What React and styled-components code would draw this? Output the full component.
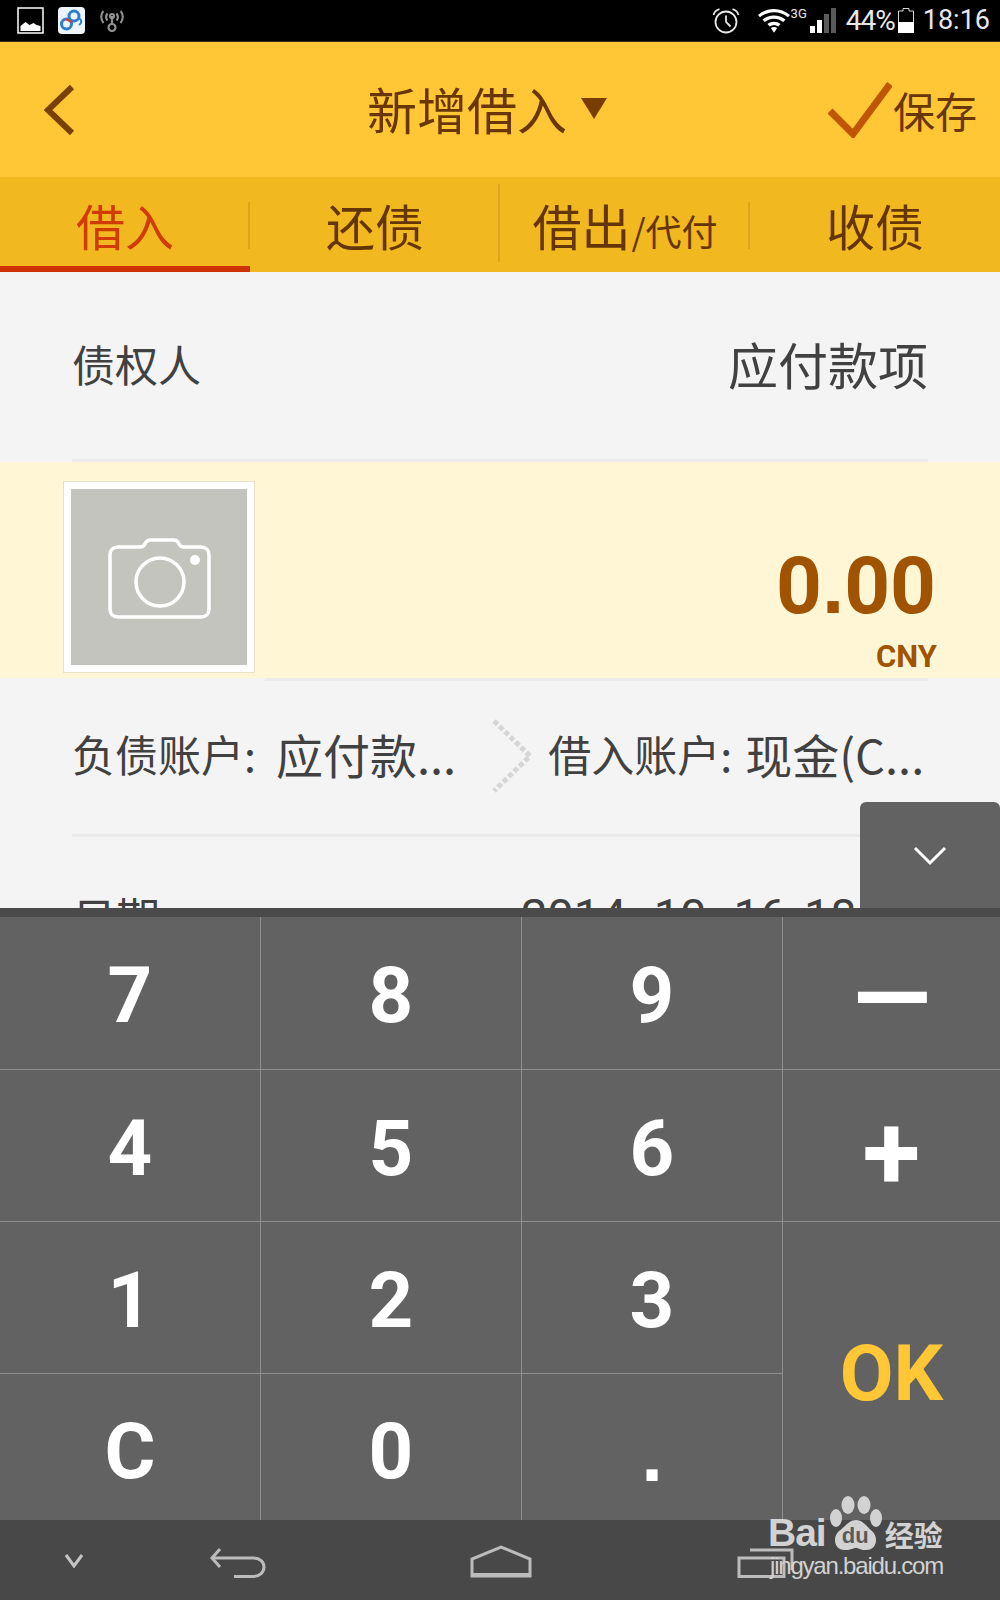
import styled, { createGlobalStyle } from "styled-components";

const GlobalStyle = createGlobalStyle`
  html, body {
    margin: 0;
    padding: 0;
    background: #f4f4f4;
  }
  * {
    box-sizing: border-box;
  }
`;

const cjk = `"Noto Sans CJK SC", "Liberation Sans", sans-serif`;
const roboto = `Roboto, "Liberation Sans", sans-serif`;
const arial = `"Liberation Sans", sans-serif`;

const Screen = styled.div`
  position: relative;
  width: 1000px;
  height: 1600px;
  display: flex;
  flex-direction: column;
  overflow: hidden;
  font-family: ${cjk};
`;

const StatusBar = styled.div`
  height: 42px;
  flex: none;
  background: #000;
  border-bottom: 1px solid #3a3218;
  display: flex;
  align-items: center;
  justify-content: space-between;
  padding: 0 10px 0 17px;
`;

const StatusGroup = styled.div`
  display: flex;
  align-items: center;
  gap: ${(p) => p.$gap || 0}px;
`;

const StatusIcon = styled.span`
  display: flex;
  margin-left: ${(p) => p.$ml || 0}px;
`;

const StatusText = styled.span`
  font-family: ${roboto};
  font-size: ${(p) => p.$size || 28}px;
  line-height: 41px;
  color: #e8e8e8;
  margin-left: ${(p) => p.$ml || 0}px;
  letter-spacing: ${(p) => p.$spacing || 0}px;
`;

const NetworkLabel = styled.span`
  font-family: ${roboto};
  font-size: 13px;
  line-height: 14px;
  color: #e8e8e8;
  margin: -13px 0 0 1px;
`;

const Header = styled.header`
  height: 135px;
  flex: none;
  background: #ffc736;
  display: grid;
  grid-template-columns: 324px auto 1fr;
  align-items: center;
  padding: 0 23px 0 43px;
`;

const Title = styled.h1`
  margin: -3px 0 0;
  display: flex;
  align-items: center;
  gap: 13px;
  font-size: 50px;
  font-weight: 400;
  line-height: 1;
  color: #6a3606;
`;

const SaveButton = styled.div`
  justify-self: end;
  display: flex;
  align-items: center;
  gap: 1px;
  font-size: 42px;
  color: #6a3606;
`;

const Tabs = styled.nav`
  height: 95px;
  flex: none;
  background: #f1b820;
  display: grid;
  grid-template-columns: repeat(4, 1fr);
`;

const Tab = styled.div`
  position: relative;
  display: flex;
  align-items: baseline;
  justify-content: center;
  padding-top: 15px;
  font-size: 49px;
  line-height: 66px;
  color: ${(p) => (p.$active ? "#cf3c05" : "#663506")};
  border-bottom: 6px solid ${(p) => (p.$active ? "#cf3106" : "transparent")};

  &::after {
    content: "";
    display: ${(p) => (p.$last ? "none" : "block")};
    position: absolute;
    right: 0;
    top: ${(p) => (p.$tall ? 7 : 25)}px;
    bottom: ${(p) => (p.$tall ? 4 : 17)}px;
    width: 2px;
    background: #dda51e;
  }
`;

const TabSmall = styled.span`
  font-size: 36px;
  margin-left: 1px;
`;

const Content = styled.main`
  flex: 1;
  min-height: 0;
  overflow: hidden;
  background: #f4f4f4;
`;

const PayeeRow = styled.div`
  height: 190px;
  margin: 0 72px;
  display: flex;
  align-items: center;
  justify-content: space-between;
  padding-bottom: 5px;
  border-bottom: 3px solid #ebebeb;
  color: #414141;
`;

const PayeeLabel = styled.span`
  font-size: 43px;
`;

const PayeeValue = styled.span`
  font-size: 50px;
`;

const AmountBlock = styled.section`
  height: 216px;
  background: #fff6d6;
  display: flex;
  padding: 20px 0 0 64px;
`;

const PhotoBox = styled.div`
  width: 190px;
  height: 190px;
  flex: none;
  background: #c4c4bf;
  border: 7px solid #fff;
  outline: 1px solid #eadfc8;
  display: flex;
  align-items: center;
  justify-content: center;
  padding: 3px 0 0 2px;
`;

const AmountCol = styled.div`
  flex: 1;
  margin: -20px 72px 0 11px;
  display: flex;
  flex-direction: column;
  align-items: flex-end;
  border-bottom: 3px solid #ebebeb;
  height: 219px;
  font-family: ${roboto};
  font-weight: 700;
  color: #a05300;
`;

const Amount = styled.div`
  font-size: 80px;
  line-height: 94px;
  margin: 77px -8px 0 0;
`;

const AmountPoint = styled.span`
  font-family: ${arial};
`;

const Currency = styled.div`
  font-size: 31px;
  line-height: 36px;
  margin: 6px -9px 0 0;
`;

const AccountRow = styled.div`
  height: 159px;
  margin: 0 72px;
  display: flex;
  align-items: center;
  padding-bottom: 6px;
  border-bottom: 3px solid #ebebeb;
  color: #414141;
  white-space: nowrap;
`;

const AccountLabel = styled.span`
  font-size: 43px;
`;

const AccountValue = styled.span`
  font-size: 47px;
  margin-left: ${(p) => p.$gap}px;
`;

const Arrow = styled.svg`
  flex: none;
  margin: 6px 16px 0 36px;
`;

const DateRow = styled.div`
  height: 157px;
  margin: 0 72px;
  display: flex;
  align-items: center;
  justify-content: space-between;
  color: #414141;
`;

const DateLabel = styled.span`
  font-size: 44px;
`;

const DateValue = styled.span`
  font-family: ${roboto};
  font-size: 47px;
  word-spacing: 6px;
  margin-right: 7px;
`;

const DateDash = styled.span`
  padding: 0 7px;
`;

const CollapseTab = styled.div`
  position: absolute;
  right: 0;
  top: 802px;
  width: 140px;
  height: 106px;
  background: #626262;
  border-radius: 6px 6px 0 0;
  display: flex;
  justify-content: center;
  padding-top: 44px;
`;

const Keypad = styled.section`
  flex: none;
  height: 612px;
  background: #626262;
  border-top: 9px solid #4a4a4a;
  display: grid;
  grid-template-columns: 261px 261px 261px 1fr;
  grid-template-rows: 153px 152px 152px 1fr;
`;

const Key = styled.div`
  display: flex;
  align-items: center;
  justify-content: center;
  padding-top: ${(p) => p.$shift ?? 6}px;
  font-family: ${(p) => (p.$arial ? arial : roboto)};
  font-weight: 700;
  font-size: ${(p) => p.$size || 78}px;
  line-height: 1;
  color: ${(p) => p.$color || "#fff"};
  border-right: ${(p) => (p.$noRight ? "0" : "1px solid #8f8f8f")};
  border-bottom: ${(p) => (p.$noBottom ? "0" : "1px solid #8f8f8f")};
  ${(p) => p.$tall && "grid-row: span 2;"}
`;

const NavBar = styled.nav`
  flex: none;
  height: 80px;
  background: #484848;
  display: grid;
  grid-template-columns: 145px 261px 267px 1fr;
  align-items: end;
  padding: 0 0 22px 64px;
`;

const NavChevronBox = styled.div`
  display: flex;
  margin-bottom: 10px;
`;

const Watermark = styled.div`
  position: absolute;
  left: 768px;
  top: 1496px;
  width: 180px;
  color: #d2d2d2;
`;

const WatermarkLogo = styled.div`
  display: flex;
  align-items: flex-end;
  height: 56px;
`;

const WatermarkBai = styled.span`
  font-family: ${arial};
  font-weight: 700;
  font-size: 39px;
  line-height: 38px;
  letter-spacing: -1px;
`;

const WatermarkPaw = styled.div`
  position: relative;
  width: 54px;
  height: 56px;
  margin-left: 3px;
  flex: none;
`;

const WatermarkDu = styled.span`
  position: absolute;
  left: 13px;
  bottom: 5px;
  font-family: ${arial};
  font-weight: 700;
  font-size: 22px;
  line-height: 22px;
  color: #5a5a5a;
`;

const WatermarkCn = styled.span`
  font-size: 29px;
  line-height: 36px;
  font-weight: 700;
  margin-left: 2px;
`;

const WatermarkUrl = styled.div`
  margin: 1px 0 0 2px;
  font-family: ${arial};
  font-size: 24px;
  line-height: 26px;
  letter-spacing: -1.2px;
  white-space: nowrap;
`;

const ImageIcon = () => (
  <svg width="27" height="27" viewBox="0 0 27 27">
    <rect x="1" y="1" width="25" height="25" fill="#000" stroke="#fff" strokeWidth="1.500" />
    <path d="M3.500 24v-5l5-4 4 3 4-2 3 2 4 1v5z" fill="#fff" />
  </svg>
);

const BaiduAppIcon = () => (
  <svg width="27" height="27" viewBox="0 0 27 27">
    <rect width="27" height="27" rx="4" fill="#eef4fa" />
    <circle cx="8.500" cy="17" r="5" fill="none" stroke="#2b7fd0" strokeWidth="3" />
    <circle cx="16" cy="9" r="5" fill="none" stroke="#2b7fd0" strokeWidth="3" />
    <path d="M8 12l6 3" stroke="#d83a3a" strokeWidth="2.500" />
    <path d="M21 11c3 2 3 5 0 7" fill="none" stroke="#2b7fd0" strokeWidth="2" />
  </svg>
);

const AntennaIcon = () => (
  <svg width="26" height="22" viewBox="0 0 26 22" fill="none" stroke="#8f8f8f" strokeWidth="2.200">
    <circle cx="13" cy="17.500" r="3.500" />
    <path d="M13 14V6" />
    <circle cx="13" cy="6" r="2" />
    <path d="M8.500 10.500c-1.600-2-1.600-5 0-7M17.500 10.500c1.600-2 1.600-5 0-7M4.500 13c-3-3.600-3-9 0-12M21.500 13c3-3.600 3-9 0-12" />
  </svg>
);

const AlarmIcon = () => (
  <svg width="28" height="26" viewBox="0 0 28 26" fill="none" stroke="#e8e8e8" strokeWidth="1.800">
    <circle cx="14" cy="14" r="10.500" />
    <path d="M14 7.500V14l4.500 4.500" />
    <path d="M1.500 7C2.500 3.500 4.500 2 7.500 1.200M26.500 7c-1-3.500-3-5-6-5.800" />
  </svg>
);

const WifiIcon = () => (
  <svg width="32" height="25" viewBox="0 0 32 25" fill="#fff">
    <path d="M0 7C9-1 23-1 32 7l-2 2.300C22 2.500 10 2.500 2 9.300z" />
    <path d="M4.500 11.500c7-5.500 16-5.500 23 0l-2.200 2.500c-5.800-4.500-12.800-4.500-18.600 0z" />
    <path d="M9.500 16c4-3 9-3 13 0l-2.300 2.500c-2.800-2-5.600-2-8.400 0z" />
    <path d="M12.800 20c2-1.200 4.400-1.200 6.400 0L16 24.800z" />
  </svg>
);

const SignalIcon = () => (
  <svg width="26" height="25" viewBox="0 0 26 25">
    <rect x="0" y="18" width="5" height="7" fill="#fff" />
    <rect x="7" y="12" width="5" height="13" fill="#fff" />
    <rect x="14" y="6" width="5" height="19" fill="#5a5a5a" />
    <rect x="21" y="0" width="5" height="25" fill="#5a5a5a" />
  </svg>
);

const BatteryIcon = () => (
  <svg width="16" height="25" viewBox="0 0 16 25">
    <path d="M5 .5h6v2.500h4.500v21.500H.5V3H5z" fill="#000" stroke="#d8d8d8" />
    <rect x="0" y="14" width="16" height="11" fill="#fff" />
  </svg>
);

const BackChevron = () => (
  <svg width="32" height="52" viewBox="0 0 32 52" fill="none">
    <path d="M29 3L5 26l24 23" stroke="#7a4003" strokeWidth="6" />
  </svg>
);

const TitleCaret = () => (
  <svg width="28" height="22" viewBox="0 0 28 22">
    <path d="M1 1h26L14 22z" fill="#7a3c00" />
  </svg>
);

const CheckMark = () => (
  <svg width="64" height="56" viewBox="0 0 64 56" fill="none">
    <path d="M2 29l23 23L62 2" stroke="#bf5604" strokeWidth="7" />
  </svg>
);

const CameraIcon = () => (
  <svg width="104" height="82" viewBox="0 0 104 82" fill="none" stroke="#fff" strokeWidth="3.500">
    <path d="M10 9h22c3 0 4-1 5-3 1-3 3-4 6-4h22c3 0 5 1 6 4 1 2 2 3 5 3h17c5 0 8 3 8 8v54c0 5-3 8-8 8H10c-5 0-8-3-8-8V17c0-5 3-8 8-8z" />
    <circle cx="52" cy="44" r="24" />
    <circle cx="87" cy="22" r="5" fill="#fff" stroke="none" />
  </svg>
);

const PixelArrow = () => (
  <Arrow width="40" height="74" viewBox="0 0 40 74">
    <path d="M2 2l36 35L2 72" fill="none" stroke="#d6d6d6" strokeWidth="5" strokeDasharray="5 2.500" />
  </Arrow>
);

const CollapseChevron = () => (
  <svg width="34" height="20" viewBox="0 0 34 20" fill="none">
    <path d="M2 2l15 15L32 2" stroke="#fff" strokeWidth="3" />
  </svg>
);

const NavChevron = () => (
  <svg width="20" height="14" viewBox="0 0 20 14" fill="none">
    <path d="M2 1l8 11 8-11" stroke="#c4c4c4" strokeWidth="3" />
  </svg>
);

const NavBack = () => (
  <svg width="57" height="30" viewBox="0 0 57 30" fill="none" stroke="#bcbcbc" strokeWidth="3">
    <path d="M11 1L3 10l8 9" />
    <path d="M3 10h41c7 0 11 4 11 9 0 5-4 9.500-11 9.500H25" />
  </svg>
);

const NavHome = () => (
  <svg width="62" height="33" viewBox="0 0 62 33" fill="none" stroke="#bcbcbc" strokeWidth="3">
    <path d="M2 31V14L31 2l29 12v17z" />
    <path d="M2 30h58" strokeWidth="4" />
  </svg>
);

const NavRecent = () => (
  <svg width="57" height="30" viewBox="0 0 57 30" fill="none" stroke="#bcbcbc" strokeWidth="3">
    <path d="M13 2h42v20" />
    <rect x="2" y="10" width="45" height="18.500" />
  </svg>
);

const PawIcon = () => (
  <svg width="54" height="56" viewBox="0 0 54 56" fill="#d2d2d2">
    <ellipse cx="7" cy="22" rx="6" ry="9" />
    <ellipse cx="19" cy="9" rx="6.500" ry="9" />
    <ellipse cx="35" cy="9" rx="6.500" ry="9" />
    <ellipse cx="47" cy="22" rx="6" ry="9" />
    <path d="M27 24c7 0 11 7 16 11 7 6 5 20-7 19-5 0-6-2-9-2s-5 2-10 2C5 55 3 41 10 35c6-4 10-11 17-11z" />
  </svg>
);

const keys = [
  { label: "7" },
  { label: "8" },
  { label: "9" },
  { label: "—", noRight: true, size: 102, shift: 10 },
  { label: "4" },
  { label: "5" },
  { label: "6" },
  { label: "+", noRight: true, size: 106, shift: 14 },
  { label: "1" },
  { label: "2" },
  { label: "3" },
  { label: "OK", noRight: true, noBottom: true, tall: true, color: "#ffc736" },
  { label: "C", noBottom: true, shift: 10 },
  { label: "0", noBottom: true, shift: 10 },
  { label: ".", noBottom: true, arial: true, shift: 14 },
];

const App = () => {
  return (
    <Screen>
      <GlobalStyle />
      <StatusBar>
        <StatusGroup $gap={14}>
          <ImageIcon />
          <BaiduAppIcon />
          <AntennaIcon />
        </StatusGroup>
        <StatusGroup>
          <AlarmIcon />
          <StatusIcon $ml={18}>
            <WifiIcon />
          </StatusIcon>
          <NetworkLabel>3G</NetworkLabel>
          <StatusIcon $ml={3}>
            <SignalIcon />
          </StatusIcon>
          <StatusText $ml={10} $spacing={-1}>
            44%
          </StatusText>
          <StatusIcon $ml={3}>
            <BatteryIcon />
          </StatusIcon>
          <StatusText $ml={9} $size={27}>
            18:16
          </StatusText>
        </StatusGroup>
      </StatusBar>

      <Header>
        <BackChevron />
        <Title>
          新增借入
          <TitleCaret />
        </Title>
        <SaveButton>
          <CheckMark />
          保存
        </SaveButton>
      </Header>

      <Tabs>
        <Tab $active>借入</Tab>
        <Tab $tall>还债</Tab>
        <Tab>
          借出<TabSmall>/代付</TabSmall>
        </Tab>
        <Tab $last>收债</Tab>
      </Tabs>

      <Content>
        <PayeeRow>
          <PayeeLabel>债权人</PayeeLabel>
          <PayeeValue>应付款项</PayeeValue>
        </PayeeRow>
        <AmountBlock>
          <PhotoBox>
            <CameraIcon />
          </PhotoBox>
          <AmountCol>
            <Amount>
              0<AmountPoint>.</AmountPoint>00
            </Amount>
            <Currency>CNY</Currency>
          </AmountCol>
        </AmountBlock>
        <AccountRow>
          <AccountLabel>负债账户:</AccountLabel>
          <AccountValue $gap={20}>应付款...</AccountValue>
          <PixelArrow />
          <AccountLabel>借入账户:</AccountLabel>
          <AccountValue $gap={13}>现金(C...</AccountValue>
        </AccountRow>
        <DateRow>
          <DateLabel>日期</DateLabel>
          <DateValue>
            2014<DateDash>-</DateDash>10<DateDash>-</DateDash>16 18:16
          </DateValue>
        </DateRow>
      </Content>

      <CollapseTab>
        <CollapseChevron />
      </CollapseTab>

      <Keypad>
        {keys.map((k) => (
          <Key
            key={k.label}
            $noRight={k.noRight}
            $noBottom={k.noBottom}
            $tall={k.tall}
            $color={k.color}
            $size={k.size}
            $shift={k.shift}
            $arial={k.arial}
          >
            {k.label}
          </Key>
        ))}
      </Keypad>

      <NavBar>
        <NavChevronBox>
          <NavChevron />
        </NavChevronBox>
        <NavBack />
        <NavHome />
        <NavRecent />
      </NavBar>

      <Watermark>
        <WatermarkLogo>
          <WatermarkBai>Bai</WatermarkBai>
          <WatermarkPaw>
            <PawIcon />
            <WatermarkDu>du</WatermarkDu>
          </WatermarkPaw>
          <WatermarkCn>经验</WatermarkCn>
        </WatermarkLogo>
        <WatermarkUrl>jingyan.baidu.com</WatermarkUrl>
      </Watermark>
    </Screen>
  );
};

export default App;
